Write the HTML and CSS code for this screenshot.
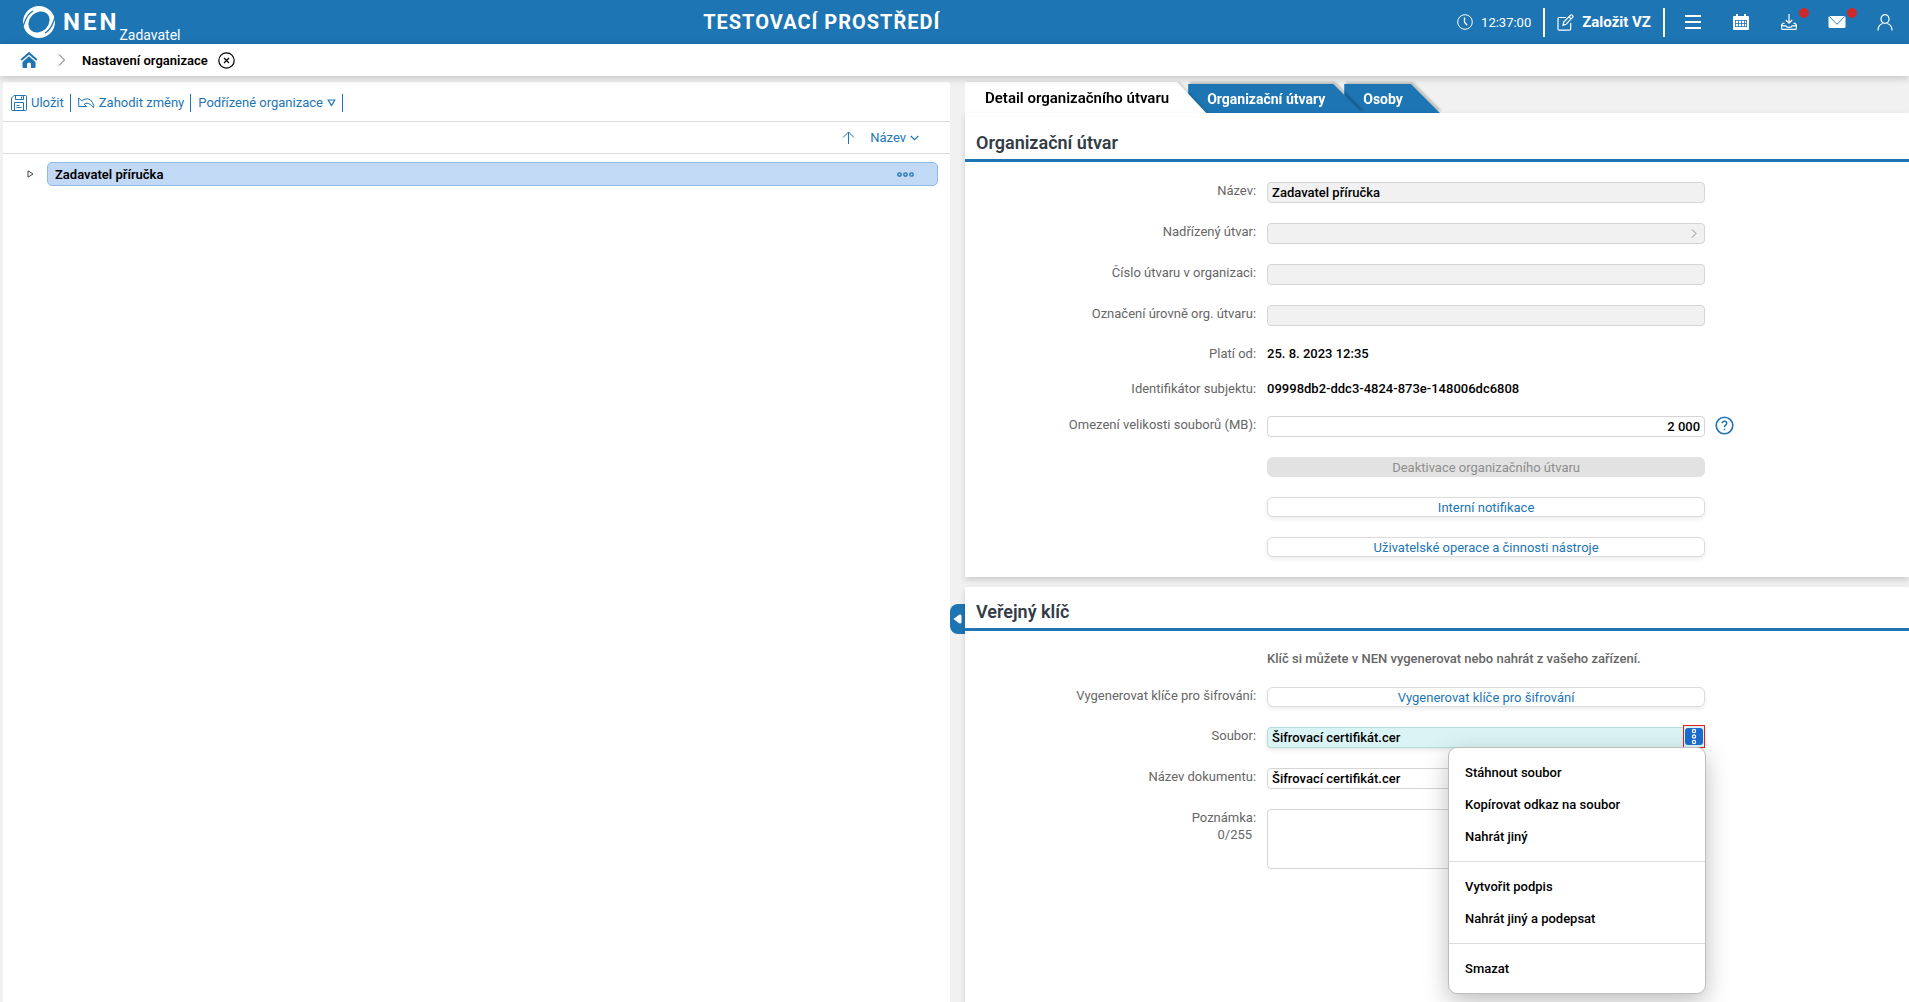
FILE: index.html
```html
<!DOCTYPE html>
<html lang="cs">
<head>
  <meta charset="UTF-8"/>
  <meta name="viewport" content="width=device-width, initial-scale=1.0"/>
  <title>NEN - Nastavení organizace</title>
  <link rel="stylesheet" href="styles.css">
</head>
<body>
  <header class="topbar">
    <a class="logo" href="#">
      <svg width="34" height="34" viewBox="0 0 34 34" aria-hidden="true">
        <circle cx="17" cy="17" r="16" fill="#fff"/>
        <ellipse cx="17" cy="17" rx="11.500" ry="9.500" fill="#1d75b3" transform="rotate(-45 17 17)"/>
        <path d="M0 23C3 19 3 10 11 6M34 11C31 15 31 24 23 28" fill="none" stroke="#1d75b3" stroke-width="1.300"/>
      </svg>
      <span class="logo-name">NEN</span>
      <span class="logo-role">Zadavatel</span>
    </a>
    <div class="env">TESTOVACÍ PROSTŘEDÍ</div>
    <div class="tools">
      <span class="clock">
        <svg width="16" height="16" viewBox="0 0 16 16" fill="none" stroke="#fff" aria-hidden="true"><circle cx="8" cy="8" r="7.3"/><path d="M7.5 3.5v4.7l2.7 3" stroke-width="1.3"/></svg>
        <time>12:37:00</time>
      </span>
      <button class="create">
        <svg width="17" height="17" viewBox="0 0 17 17" fill="none" stroke="#fff" stroke-width="1.2" aria-hidden="true"><path d="M9 3.500H2.200Q1 3.500 1 4.700V15q0 1.200 1.200 1.200H12.500q1.200 0 1.200-1.200V9M6 11.300l.7-3.300L13.500 1.300q1-.8 2 .1t.1 2L9 10.300zM12 2.800l2.200 2.200"/></svg>
        Založit VZ
      </button>
      <button class="icon-btn" aria-label="Menu">
        <svg width="16" height="16" viewBox="0 0 16 16" stroke="#fff" stroke-width="2"><path d="M0 2h16M0 8h16M0 14h16"/></svg>
      </button>
      <button class="icon-btn" aria-label="Kalendář">
        <svg width="16" height="16" viewBox="0 0 16 16"><path fill="#fff" d="M1 2h2V0h2v2h6V0h2v2h2q1 0 1 1v12q0 1-1 1H1q-1 0-1-1V3q0-1 1-1z"/><path stroke="#1d75b3" fill="none" d="M2 6.500h12M2 9.500h12M2 12.500h12M2.500 6v7M5.500 6v7M8.500 6v7M11.500 6v7M13.500 6v7" stroke-width=".8"/></svg>
      </button>
      <button class="icon-btn" aria-label="Stažené soubory">
        <svg width="16" height="16" viewBox="0 0 16 16" fill="none" stroke="#fff" stroke-width="1.200"><path d="M8 0v9M4.800 6 8 9.200 11.200 6M3.500 9.300H2L.6 11v3.300q0 1.100 1 1.100h12.800q1 0 1-1.100V11L14 9.300h-1.500M.6 11.800h4.200q.5 1.600 3.200 1.600t3.200-1.600h4.200"/></svg>
        <span class="dot"></span>
      </button>
      <button class="icon-btn" aria-label="Zprávy">
        <svg width="18" height="14" viewBox="0 0 18 14"><rect x=".5" y="1" width="17" height="12" rx="1.500" fill="#fff"/><path d="M1.500 1.500l6.500 7q1 1 2 0l6.500-7" fill="none" stroke="#1d75b3" stroke-width=".9"/></svg>
        <span class="dot"></span>
      </button>
      <button class="icon-btn" aria-label="Uživatel">
        <svg width="16" height="17" viewBox="0 0 16 17" fill="none" stroke="#fff" stroke-width="1.200"><ellipse cx="8" cy="5" rx="4" ry="4.400"/><path d="M1 16.500Q1.200 10.500 5.800 9.500M15 16.500Q14.800 10.500 10.200 9.500"/></svg>
      </button>
    </div>
  </header>

  <nav class="crumbs" aria-label="Navigace">
    <a class="home" href="#" aria-label="Domů">
      <svg width="18" height="16" viewBox="0 0 18 16"><path d="M1.200 8 9 1.200 16.800 8" fill="none" stroke="#1d75b3" stroke-width="2"/><path fill="#1d75b3" d="M9 4.200 15.500 10v5q0 1-1 1H11v-3.500q0-2-2-2t-2 2V16H3.500q-1 0-1-1v-5z"/></svg>
    </a>
    <svg class="crumb-arrow" width="8" height="12" viewBox="0 0 8 12" fill="none" stroke="#555"><path d="M1 .5 6.500 6 1 11.500"/></svg>
    <span class="crumb-title">Nastavení organizace</span>
    <button class="close" aria-label="Zavřít">
      <svg width="17" height="17" viewBox="0 0 17 17" fill="none" stroke="#000"><circle cx="8.500" cy="8.500" r="7.700" stroke-width="1.200"/><path d="M6 6l5 5M11 6l-5 5" stroke-width="1.200"/></svg>
    </button>
  </nav>

  <main class="content">
    <section class="tree">
      <div class="toolbar">
        <button class="tool">
          <svg width="16" height="16" viewBox="0 0 16 16" fill="none" stroke="#1d75b3"><path d="M3 .5H14.500q1 0 1 1v13q0 1-1 1H1.500q-1 0-1-1V3zM4.500.5v4h8v-4M10.500 1.500v2M3.500 15.500v-8h9v8M5.500 10.500h3M5.500 12.500h5"/></svg>
          Uložit
        </button>
        <button class="tool">
          <svg width="17" height="12" viewBox="0 0 17 12" fill="none" stroke="#1d75b3"><path d="M.7 1v8.500h8L6.200 7.300Q9.500 3.800 15.500 10.500 16.500 9 14.500 5.500 11-1 3.800 3.700z" stroke-linejoin="round"/></svg>
          Zahodit změny
        </button>
        <button class="tool">
          Podřízené organizace
          <svg class="caret" width="9" height="8" viewBox="0 0 9 8" fill="none" stroke="#1d75b3" stroke-width="1.200"><path d="M1.200 1h6.600L4.500 6.600z"/></svg>
        </button>
      </div>
      <div class="sortbar">
        <button class="sort" aria-label="Vzestupně">
          <svg width="13" height="13" viewBox="0 0 13 13" fill="none" stroke="#1d75b3"><path d="M6.500 13V1M1 6.500l5.500-5.500L12 6.500"/></svg>
        </button>
        <button class="sort">
          Název
          <svg width="9" height="6" viewBox="0 0 9 6" fill="none" stroke="#1d75b3" stroke-width="1.200"><path d="M.7 1l3.800 3.700L8.300 1"/></svg>
        </button>
      </div>
      <div class="tree-row">
        <button class="expand" aria-label="Rozbalit">
          <svg width="7" height="8" viewBox="0 0 7 8" fill="none" stroke="#444"><path d="M1 .8v6.400L6 4z"/></svg>
        </button>
        <div class="node">
          <span>Zadavatel příručka</span>
          <button class="more" aria-label="Akce">
            <svg width="17" height="5" viewBox="0 0 17 5" fill="none" stroke="#1d75b3" stroke-width="1.300"><circle cx="2.500" cy="2.500" r="1.700"/><circle cx="8.500" cy="2.500" r="1.700"/><circle cx="14.500" cy="2.500" r="1.700"/></svg>
          </button>
        </div>
      </div>
    </section>

    <div class="divider">
      <button class="collapse" aria-label="Sbalit panel">
        <svg width="9" height="10" viewBox="0 0 9 10" fill="#fff"><path d="M.5 5 6.500.5Q8.500 0 8.500 2v6q0 2-2 1.500z"/></svg>
      </button>
    </div>

    <div class="detail">
      <div class="tabs" role="tablist">
        <div class="tab active"><button role="tab" aria-selected="true">Detail organizačního útvaru</button></div>
        <div class="tab second"><button role="tab" aria-selected="false">Organizační útvary</button></div>
        <div class="tab"><button role="tab" aria-selected="false">Osoby</button></div>
      </div>

      <section class="panel">
        <h2>Organizační útvar</h2>
        <div class="form">
          <div class="row">
            <label for="nazev">Název:</label>
            <input type="text" id="nazev" value="Zadavatel příručka" readonly>
          </div>
          <div class="row">
            <label for="nadrizeny">Nadřízený útvar:</label>
            <div class="field">
              <input type="text" id="nadrizeny" readonly>
              <svg class="lookup" width="6" height="9" viewBox="0 0 6 9" fill="none" stroke="#888"><path d="M1 .5l4 4-4 4"/></svg>
            </div>
          </div>
          <div class="row">
            <label for="cislo">Číslo útvaru v organizaci:</label>
            <input type="text" id="cislo" readonly>
          </div>
          <div class="row">
            <label for="uroven">Označení úrovně org. útvaru:</label>
            <input type="text" id="uroven" readonly>
          </div>
          <div class="row">
            <span class="label">Platí od:</span>
            <span class="value">25. 8. 2023 12:35</span>
          </div>
          <div class="row">
            <span class="label">Identifikátor subjektu:</span>
            <span class="value">09998db2-ddc3-4824-873e-148006dc6808</span>
          </div>
          <div class="row">
            <label for="omezeni">Omezení velikosti souborů (MB):</label>
            <div class="field">
              <input class="number" type="text" id="omezeni" value="2 000">
              <button class="help" aria-label="Nápověda">
                <svg width="19" height="19" viewBox="0 0 19 19" fill="none" stroke="#1d75b3"><circle cx="9.500" cy="9.500" r="8.300" stroke-width="1.600"/><path d="M7.200 7.300Q7.300 5.200 9.500 5.200t2.200 2q0 1.100-1.200 2-1 .7-1 2M9.500 12.700v1.500" stroke-width="1.500"/></svg>
              </button>
            </div>
          </div>
          <div class="row"><button class="btn" disabled>Deaktivace organizačního útvaru</button></div>
          <div class="row"><button class="btn">Interní notifikace</button></div>
          <div class="row"><button class="btn">Uživatelské operace a činnosti nástroje</button></div>
        </div>
      </section>

      <section class="panel key">
        <h2>Veřejný klíč</h2>
        <div class="form">
          <div class="row"><p class="hint">Klíč si můžete v NEN vygenerovat nebo nahrát z vašeho zařízení.</p></div>
          <div class="row">
            <label for="generovat">Vygenerovat klíče pro šifrování:</label>
            <button class="btn" id="generovat">Vygenerovat klíče pro šifrování</button>
          </div>
          <div class="row">
            <label for="soubor">Soubor:</label>
            <div class="field">
              <input class="file" type="text" id="soubor" value="Šifrovací certifikát.cer" readonly>
              <button class="file-menu" aria-label="Akce souboru" aria-expanded="true">
                <svg width="18" height="17" viewBox="0 0 18 17"><rect width="18" height="17" rx="3" fill="#1b6ed0"/><g fill="none" stroke="#fff" stroke-width="1.200"><circle cx="9" cy="3" r="1.600"/><circle cx="9" cy="8.500" r="1.600"/><circle cx="9" cy="14" r="1.600"/></g></svg>
              </button>
              <div class="menu" role="menu">
                <div class="menu-group">
                  <button role="menuitem">Stáhnout soubor</button>
                  <button role="menuitem">Kopírovat odkaz na soubor</button>
                  <button role="menuitem">Nahrát jiný</button>
                </div>
                <div class="menu-group">
                  <button role="menuitem">Vytvořit podpis</button>
                  <button role="menuitem">Nahrát jiný a podepsat</button>
                </div>
                <div class="menu-group">
                  <button role="menuitem">Smazat</button>
                </div>
              </div>
            </div>
          </div>
          <div class="row">
            <label for="dokument">Název dokumentu:</label>
            <input type="text" id="dokument" value="Šifrovací certifikát.cer">
          </div>
          <div class="row">
            <label for="poznamka">Poznámka:<span class="count">0/255</span></label>
            <textarea id="poznamka"></textarea>
          </div>
        </div>
      </section>
    </div>
  </main>
</body>
</html>
```
FILE: styles.css
```css
* { box-sizing: border-box; }
body { margin: 0; min-height: 100vh; display: flex; flex-direction: column; font-family: Roboto, sans-serif; font-size: 13px; line-height: 15px; background: #f1f1f1; color: #000; }
button, input, textarea { font: inherit; margin: 0; }
button { background: none; border: none; padding: 0; color: inherit; cursor: pointer; }
a { text-decoration: none; color: inherit; }
svg { display: block; flex: none; }

/* top bar */
.topbar { display: flex; align-items: center; justify-content: space-between; height: 44px; padding-left: 22px; background: #1d75b3; color: #fff; }
.logo { display: flex; align-items: center; height: 44px; }
.logo-name { margin-left: 7px; font-size: 24px; line-height: 28px; font-weight: 700; letter-spacing: 3px; }
.logo-role { align-self: flex-end; padding-bottom: 1px; font-size: 14px; line-height: 16px; }
.env { padding-left: 6px; font-size: 20px; line-height: 24px; font-weight: 700; letter-spacing: 1px; }
.tools { display: flex; align-items: center; }
.clock { display: flex; align-items: center; gap: 8px; padding-right: 12px; }
.create { display: flex; align-items: center; gap: 8px; height: 29px; padding: 0 12px; border-left: 2px solid #fff; border-right: 2px solid #fff; font-size: 15px; font-weight: 700; }
.icon-btn { position: relative; display: flex; align-items: center; justify-content: center; width: 48px; height: 44px; }
.create + .icon-btn { margin-left: 4px; }
.dot { position: absolute; top: 8px; right: 4px; width: 10px; height: 10px; border-radius: 50%; background: #cc2a2a; }

/* breadcrumbs */
.crumbs { position: relative; display: flex; align-items: center; height: 32px; padding-left: 20px; background: #fff; box-shadow: 0 2px 8px rgba(0,0,0,0.2); z-index: 4; }
.crumb-arrow { margin: 0 16px 0 20px; }
.crumb-title { font-weight: 600; }
.close { margin-left: 10px; }

.content { flex: 1; display: grid; grid-template-columns: 947fr 15px 944fr; padding: 6px 0 0 3px; }

/* organisation tree */
.tree { background: #fff; }
.toolbar { display: flex; align-items: center; height: 40px; padding: 2px 0 0 8px; border-bottom: 1px solid #dcdcdc; color: #1d75b3; }
.tool { display: flex; align-items: center; gap: 4px; height: 18px; padding-right: 6px; margin-right: 7px; border-right: 1px solid #1d75b3; }
.sortbar { display: flex; align-items: center; justify-content: flex-end; gap: 15px; height: 32px; padding-right: 31px; border-bottom: 1px solid #dcdcdc; color: #1d75b3; }
.sort { display: flex; align-items: center; gap: 4px; }
.tree-row { display: flex; align-items: center; padding: 8px 12px 0 24px; }
.expand { width: 20px; }
.node { flex: 1; display: flex; align-items: center; justify-content: space-between; height: 24px; padding: 0 23px 0 7px; border: 1px solid #8fbbeb; border-radius: 5px; background: #c2d9f5; font-weight: 600; }

/* panel splitter */
.divider { padding-top: 522px; }
.collapse { display: flex; align-items: center; justify-content: center; width: 15px; height: 30px; border-radius: 8px 0 0 8px; background: #1d75b3; }

/* tabs are cut diagonally, the earlier one lies over the next */
.tabs { display: flex; align-items: flex-end; height: 31px; }
.tab { margin-left: -18px; filter: drop-shadow(2px -2px 1px rgba(0,0,0,0.2)); }
.tab button { display: block; height: 29px; padding: 2px 37px 0 19px; background: #1d75b3; color: #fff; font-size: 14px; font-weight: 700; clip-path: polygon(0 0, calc(100% - 29px) 0, 100% 100%, 0 100%); }
.tab.second { position: relative; z-index: 1; }
.tab.active { position: relative; z-index: 2; margin-left: 0; filter: drop-shadow(2px 0 1px rgba(0,0,0,0.15)); }
.tab.active button { height: 31px; padding-left: 20px; background: #fff; color: #000; font-size: 15px; font-weight: 600; }

/* detail */
.detail { display: flex; flex-direction: column; min-width: 0; }
.panel { position: relative; z-index: 3; padding-bottom: 20px; background: #fff; box-shadow: 0 3px 6px rgba(0,0,0,0.15); }
.panel.key { flex: 1; margin-top: 10px; }
.panel h2 { margin: 0; padding: 20px 11px 6px; border-bottom: 3px solid #1d75b3; font-size: 18px; line-height: 20px; font-weight: 600; color: #333c46; }
.panel.key h2 { padding-top: 15px; }
.form { display: flex; flex-direction: column; gap: 20px; padding-top: 20px; }
.row { display: grid; grid-template-columns: 32% 46.4% 1fr; align-items: start; }
.row label, .label { padding-right: 11px; text-align: right; color: #666; }
.row label { line-height: 17px; }
.count { display: block; padding-right: 4px; }
.field { position: relative; display: flex; }
.field input { flex: 1; }
.row input, .row textarea { display: block; width: 100%; min-width: 0; height: 21px; padding: 0 4px; border: 1px solid #d5d5d5; border-radius: 4px; background: #fff; color: #000; font-weight: 500; }
.row input:read-only { background: #f1f1f1; }
.row textarea { height: 60px; resize: none; }
.row input.number { text-align: right; }
.row input.file { border-color: #b5dcdc; background: #daf4f6; box-shadow: 0 2px 4px rgba(0,0,0,0.1); }
.value, .hint { font-weight: 500; }
.hint { grid-column: 2; margin: 0; line-height: 16px; color: #666; white-space: nowrap; }
.lookup { position: absolute; top: 6px; right: 8px; }
.help { position: absolute; top: 0; left: calc(100% + 10px); }
.btn { grid-column: 2; height: 20px; border: 1px solid #dcdcdc; border-radius: 6px; background: #fff; color: #1d75b3; box-shadow: 0 2px 4px rgba(0,0,0,0.08); }
.btn:disabled { border-color: #e2e2e2; background: #e2e2e2; color: #8e8e8e; box-shadow: none; }

/* file action menu */
.file-menu { position: absolute; right: 0; bottom: 0; padding: 2px 1px; border: 1px solid #e02020; background: #daf4f6; }
.menu { position: absolute; top: 20px; right: -1px; z-index: 5; width: 258px; border: 1px solid #bdbdbd; border-radius: 9px; background: #fff; box-shadow: 0 8px 24px rgba(0,0,0,0.25); }
.menu-group { padding: 8px 0 9px; }
.menu-group + .menu-group { border-top: 1px solid #dcdcdc; }
.menu button { display: block; width: 100%; height: 32px; padding-left: 16px; text-align: left; font-weight: 500; }
```
